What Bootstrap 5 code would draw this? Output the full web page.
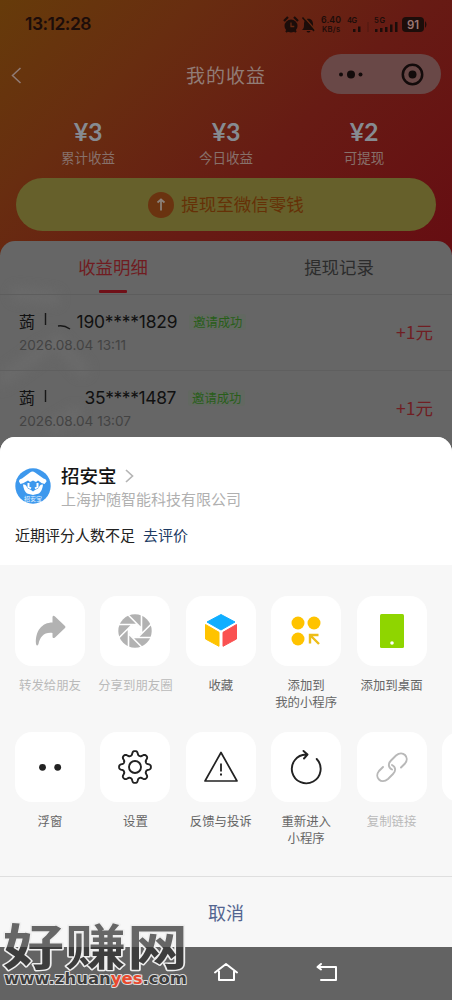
<!DOCTYPE html>
<html lang="zh-CN">
<head>
<meta charset="utf-8">
<meta name="viewport" content="width=device-width, initial-scale=1">
<title>我的收益</title>
<link href="https://cdn.jsdelivr.net/npm/bootstrap@5.3.0/dist/css/bootstrap.min.css" rel="stylesheet">
<style>
body{width:452px;height:1000px;overflow:hidden;background:#666;font-family:"Noto Sans CJK SC",sans-serif;font-weight:400}
svg{display:block;flex:none}
.phone{width:452px;height:1000px;overflow:hidden}
.hero{height:257px;background:linear-gradient(135deg,#663b0a 0%,#682d10 28%,#671b14 60%,#660d12 100%);color:#8b7c79}
.statusbar{height:49px;padding:0 24px 0 25px;color:#1c0d0a;font-family:Inter,sans-serif}
.clock{font-size:17.5px;font-weight:600;letter-spacing:-.52px}
.titlebar{height:53px;color:#917c76}
.titlebar h1{font-size:19px;font-weight:400;letter-spacing:1px;margin:0;line-height:51px}
.capsule{width:120px;height:40px;border-radius:20px;background:#694847;right:11px;top:5px}
.stats{padding:16px 19px 0;height:76px}
.stat-num{font:700 25px/26px Lato,sans-serif;height:26px;color:#868b91;letter-spacing:-.3px}
.stat-cap{font-size:13.5px;line-height:20px;margin-top:3px;color:#87716b}
.withdraw{height:53px;width:420px;margin:0 auto;border-radius:27px;background:#66602b;color:#653107;font-size:17.5px;gap:7px}
.sheet-list{margin-top:-16px;background:#666;border-radius:15px 15px 0 0}
.tabs{height:54px;border-bottom:1px solid #5d5d5d;font-size:17.4px;line-height:52px;color:#2c2c2c}
.tab-on{color:#701c21}
.tab-on::after{content:"";position:absolute;left:50%;bottom:1px;width:28px;height:3px;margin-left:-14px;background:#701018;border-radius:1px}
.entry{height:76px;border-bottom:1px solid #5f5f5f;padding:16px 19px 0}
.who{font-size:16px;line-height:22px;height:22px;color:#111}
.who>span:first-child{margin-top:-2px}
.phone-no{font:400 17.4px/22px Inter,sans-serif;color:#111}
.tag-ok{font-size:12.3px;line-height:16px;color:#285e19;background:#626861;padding:0 4px;border-radius:3px;margin-left:12px}
.when{font:400 13.6px/20px Inter,sans-serif;color:#434343;margin-top:2px}
.gain{font-size:17.5px;line-height:24px;color:#701e23;margin-top:9px}
.sheet{left:0;right:0;top:437px;height:510px;background:#f7f7f7;border-radius:15px 15px 0 0;overflow:hidden}
.sheet-top{height:128px;background:#fff;padding:26px 15px 0}
.app-name{font-size:18.5px;font-weight:500;line-height:25px;color:#151515}
.app-co{font-size:15px;line-height:22px;color:#b0b0b0}
.rate{font-size:15px;line-height:22px;color:#222;margin-top:14px}
.rate a{color:#1c3a63;text-decoration:none}
.tools{padding-left:15px;gap:15.4px;height:136px}
.tool{width:70px;flex:none}
.tile{width:70px;height:70px;border-radius:17px;background:#fff}
.tool-cap{font-size:12.4px;line-height:16.5px;color:#666;margin:11px -12px 0;text-align:center;white-space:nowrap}
.off .tool-cap{color:#bababa}
.cancel{border-top:1px solid #dfdfdf;height:71px;color:#536590;font-size:18px;line-height:70px}
.sysbar{left:0;right:0;top:947px;height:53px;background:#636363}
.stamp{left:0;top:905px}
</style>
</head>
<body>
<div class="phone position-relative">
  <header class="hero">
    <div class="statusbar d-flex align-items-center justify-content-between">
      <span class="clock">13:12:28</span>
      <svg width="146" height="20" viewBox="0 0 146 20" fill="#1c0d0a">
        <circle cx="9" cy="11" r="6.500"/><path d="M2 6l4-4M12 2l4 4M4 17l2-2M14 17l-2-2" stroke="#1c0d0a" stroke-width="2.200"/><path d="M9 7.500v4h3.300" fill="none" stroke="#662911" stroke-width="1.300"/>
        <path d="M20 15c2-2 2-3 2-6 0-7 9-7 9 0 0 3 0 4 2 6zM24.500 16h4c-1 2-3 2-4 0z"/><path d="M22.500 2.500L33.500 15" stroke="#662911" stroke-width="1.300"/><path d="M20.500 2.500L32 16" stroke="#1c0d0a" stroke-width="1.500"/>
        <g font-family="Inter" font-weight="600"><text x="39" y="8" font-size="8.800" textLength="20">6.40</text><text x="40" y="17" font-size="7.500" textLength="18">KB/s</text><text x="65" y="8" font-size="7.500" textLength="10">4G</text><text x="92" y="8" font-size="7.500" textLength="11">5G</text></g>
        <path d="M71 14h2.500v3H71zM76 11.500h2.500V17H76zM93 14h2.500v3H93zM98 13h2.500v4H98zM103 12h2.500v5H103zM108 9.500h2.500V17H108zM113 7h2.500v10H113z"/><path d="M85 7h2v10h-2z" opacity=".15"/>
        <rect x="120" y="2" width="22" height="15" rx="4"/><path d="M143 6q3 3.500 0 7z"/><text x="131" y="14" text-anchor="middle" font-family="Inter" font-weight="600" font-size="11.500" fill="#9b7774">91</text>
      </svg>
    </div>
    <div class="titlebar position-relative text-center">
      <svg class="position-absolute" style="left:10px;top:18px" width="12" height="18" fill="none" stroke="#917c76" stroke-width="1.500"><path d="M10.500 1L2.500 8.500l8 7.500"/></svg>
      <h1>我的收益</h1>
      <div class="capsule position-absolute">
        <svg width="120" height="40" fill="#130b0b"><circle cx="20" cy="20.500" r="2"/><circle cx="30" cy="20.500" r="4"/><circle cx="39.500" cy="20.500" r="2"/><circle cx="91.500" cy="20.500" r="4"/><circle cx="91.500" cy="20.500" r="9.700" fill="none" stroke="#130b0b" stroke-width="2.500"/></svg>
      </div>
    </div>
    <div class="stats row g-0 text-center">
      <div class="col-4"><div class="stat-num">¥3</div><div class="stat-cap">累计收益</div></div>
      <div class="col-4"><div class="stat-num">¥3</div><div class="stat-cap">今日收益</div></div>
      <div class="col-4"><div class="stat-num">¥2</div><div class="stat-cap">可提现</div></div>
    </div>
    <div class="withdraw d-flex align-items-center justify-content-center">
      <svg width="26" height="26"><circle cx="13" cy="13" r="13" fill="#6a3310"/><path d="M13 18.500V8M9.500 10.500L13 7.500l3.500 3" fill="none" stroke="#8b8078" stroke-width="1.800"/></svg>
      <span>提现至微信零钱</span>
    </div>
  </header>

  <main class="sheet-list position-relative">
    <svg class="position-absolute" style="left:0;top:40px;filter:blur(5px)" width="100" height="155"><path d="M18 13l35 4M0 100l45-32M57 60l25 28M55 145l20-12" stroke="#6d6d6d" stroke-width="16" stroke-linecap="round" opacity=".6"/></svg>
    <div class="tabs d-flex text-center position-relative">
      <div class="tab-on col-6 position-relative">收益明细</div><div class="col-6">提现记录</div>
    </div>
    <div class="entry d-flex justify-content-between position-relative">
      <div>
        <div class="who d-flex align-items-center"><span>蒟</span>
          <svg width="41.500" height="22" fill="none" stroke="#171717"><path d="M10.500 2v12" stroke-width="1.400"/><path d="M23 15q6-1 12 3" stroke-width="1.500"/></svg>
          <span class="phone-no" style="letter-spacing:-.2px">190****1829</span><span class="tag-ok">邀请成功</span></div>
        <div class="when">2026.08.04 13:11</div>
      </div>
      <div class="gain">+1元</div>
    </div>
    <div class="entry d-flex justify-content-between position-relative">
      <div>
        <div class="who d-flex align-items-center"><span>蒟</span>
          <svg width="49.500" height="22" fill="none" stroke="#171717"><path d="M10.500 3v12" stroke-width="1.400"/></svg>
          <span class="phone-no" style="letter-spacing:-.35px">35****1487</span><span class="tag-ok">邀请成功</span></div>
        <div class="when">2026.08.04 13:07</div>
      </div>
      <div class="gain">+1元</div>
    </div>
  </main>

  <section class="sheet position-absolute">
    <div class="sheet-top">
      <div class="d-flex">
        <svg width="36" height="36" viewBox="0 0 36 36" style="margin:5px 10px 0 0"><circle cx="18" cy="18" r="17.700" fill="#3d98ed"/><path d="M4 13.500Q4 11 7 10.500L15 4.500q2.500-2 5 0l8.500 6q3 .5 3 3l-2 2.500-3-1-3.500-2.500-2 1.500-3-1.500-3 1.500-2-1.500L8.500 15l-3 1z" fill="#fff"/><path d="M8 16.500q2-.5 3 1l2 3 3 1.500 2 1.500 2-1.500 3-1.500 2-3q1-1.500 3-1-.5 6-4 9l-6 1.500-6-1.500q-3.500-3-4-9z" fill="#fff"/><path d="M13.500 15v4l2.500 1.500M22.500 15v4L20 20.500" fill="none" stroke="#fff" stroke-width="2"/><text x="18" y="32.500" font-size="6" font-weight="500" text-anchor="middle" fill="#d9edff">招安宝</text></svg>
        <div>
          <div class="app-name d-flex align-items-center">招安宝<svg width="10" height="14" class="ms-2" fill="none" stroke="#b5b5b5" stroke-width="1.700"><path d="M1 1l6.500 6L1 13"/></svg></div>
          <div class="app-co">上海护随智能科技有限公司</div>
        </div>
      </div>
      <div class="rate">近期评分人数不足<a href="#" class="ms-2">去评价</a></div>
    </div>

    <div class="tools d-flex" style="margin-top:31px">
      <div class="tool off"><div class="tile d-flex align-items-center justify-content-center">
        <svg width="36" height="36" fill="#b2b2b2"><path d="M20.500 4q.5-2 2.500-.5l10 9.500q1 1 0 2L23 24.500q-2.500 1.500-2.500-1V20C12 19 8 24 6.500 31q-1.500 3-2.500 0C3 18 10 9.500 20.500 9.500z"/></svg>
      </div><div class="tool-cap">转发给朋友</div></div>
      <div class="tool off"><div class="tile d-flex align-items-center justify-content-center">
        <svg width="36" height="36" viewBox="-18 -18 36 36"><circle r="16.700" fill="#b2b2b2"/><circle r="6.500" fill="#fff"/><path d="M-6.500 3V-18M-6.700-2.500L8-17.300M-3-6.500H18M2.500-6.700L17.300 8M6.500-3V18M6.700 2.500L-8 17.300M3 6.500H-18M-2.500 6.700L-17.300-8" stroke="#fff" stroke-width="1.600" transform="scale(-1 1)"/></svg>
      </div><div class="tool-cap">分享到朋友圈</div></div>
      <div class="tool"><div class="tile d-flex align-items-center justify-content-center">
        <svg width="36" height="36" stroke-linejoin="round" stroke-width="1"><path d="M18 1.500L32 9l-14 8L4 9z" fill="#10aeff" stroke="#10aeff"/><path d="M2.500 11.500L16 19.300v14L2.500 26z" fill="#ffc300" stroke="#ffc300"/><path d="M33.500 11.500L20 19.300v14L33.500 26z" fill="#fa5151" stroke="#fa5151"/></svg>
      </div><div class="tool-cap">收藏</div></div>
      <div class="tool"><div class="tile d-flex align-items-center justify-content-center">
        <svg width="36" height="36" fill="#ffc300"><circle cx="10" cy="10" r="6.500"/><circle cx="26" cy="10" r="6.500"/><circle cx="10" cy="26" r="6.500"/><path d="M31 31L22.500 22.500M22 30.500V22h8.500" fill="none" stroke="#edbd18" stroke-width="2.400"/></svg>
      </div><div class="tool-cap">添加到<br>我的小程序</div></div>
      <div class="tool"><div class="tile d-flex align-items-center justify-content-center">
        <svg width="24" height="34"><rect width="24" height="34" rx="1.500" fill="#8fd500"/><circle cx="12" cy="29" r="1.800" fill="#fff"/></svg>
      </div><div class="tool-cap">添加到桌面</div></div>
    </div>

    <div class="tools d-flex">
      <div class="tool"><div class="tile d-flex align-items-center justify-content-center">
        <svg width="36" height="36" fill="#222"><circle cx="10.500" cy="18.300" r="3.400"/><circle cx="25.700" cy="18.300" r="3.400"/></svg>
      </div><div class="tool-cap">浮窗</div></div>
      <div class="tool"><div class="tile d-flex align-items-center justify-content-center">
        <svg width="36" height="36" viewBox="-18 -18 36 36" fill="none" stroke="#222" stroke-width="1.900" stroke-linejoin="round"><path id="gear"/><circle r="6"/></svg>
      </div><div class="tool-cap">设置</div></div>
      <div class="tool"><div class="tile d-flex align-items-center justify-content-center">
        <svg width="36" height="36" fill="none" stroke="#222" stroke-width="1.700" stroke-linejoin="round"><path d="M18 3.500L34 32H2z"/><path d="M18 14.500v8" stroke-width="1.800"/><path d="M18 24.500v2" stroke-width="2"/></svg>
      </div><div class="tool-cap">反馈与投诉</div></div>
      <div class="tool"><div class="tile d-flex align-items-center justify-content-center">
        <svg width="36" height="36" fill="none" stroke="#222" stroke-width="1.900" stroke-linecap="round" stroke-linejoin="round"><path d="M28.700 10A14.400 14.400 0 1 1 18 5.500M15.500 2l4 3.500-3.500 4"/></svg>
      </div><div class="tool-cap">重新进入<br>小程序</div></div>
      <div class="tool off"><div class="tile d-flex align-items-center justify-content-center">
        <svg width="36" height="36" fill="none" stroke="#b8b8b8" stroke-width="1.900" stroke-linecap="round"><path d="M18 20.500c-4-2-4-6-1-9l5-5c7-6 14 2 9 8l-4 4M18 16c4 2 4 6 1 9l-5 5c-7 6-14-2-9-8l4-4"/></svg>
      </div><div class="tool-cap">复制链接</div></div>
      <div class="tool"><div class="tile"></div></div>
    </div>
    <div style="height:8px"></div>
    <div class="cancel text-center">取消</div>
  </section>

  <nav class="sysbar position-absolute">
    <svg width="452" height="53" fill="none" stroke="#fff" stroke-width="2" stroke-linejoin="round" stroke-linecap="round"><path d="M215 25.500L226 17l11 8.500M219 24.500v8.500h15v-8.500"/><path d="M321 17l-3.500 3h18.500v13h-15M317.500 20l3.500 2.500"/></svg>
  </nav>

  <svg class="stamp position-absolute" width="196" height="95" stroke-linejoin="round" paint-order="stroke">
    <defs><linearGradient id="ink" gradientUnits="userSpaceOnUse" x1="0" y1="-60" x2="0" y2="0"><stop offset=".62" stop-color="#666"/><stop offset=".62" stop-color="#3d3d3d"/></linearGradient></defs>
    <text transform="translate(3 60) scale(1 .81)" font-size="61" font-weight="700" textLength="185" fill="url(#ink)" stroke="#efefef" stroke-width="3.500">好赚网</text>
    <text x="4" y="79" font-family="DejaVu Sans" font-weight="700" font-size="15.500" textLength="183" lengthAdjust="spacingAndGlyphs" fill="#3d3d3d" stroke="#dcdcdc" stroke-width="2">www.zhuan<tspan fill="#e8492e">yes</tspan>.com</text>
  </svg>
</div>
<script>
// Settings gear: eight rounded teeth, radius follows a smooth wave
const pts = [];
for (let i = 0; i < 240; i++) {
  const a = i / 240 * Math.PI * 2, r = 13.900 + 2 * Math.tanh(1.600 * Math.cos(8 * a)) / Math.tanh(1.600);
  pts.push((r * Math.cos(a)).toFixed(2) + ' ' + (r * Math.sin(a)).toFixed(2));
}
document.getElementById('gear').setAttribute('d', 'M' + pts.join('L') + 'Z');
</script>
<script src="https://cdn.jsdelivr.net/npm/bootstrap@5.3.0/dist/js/bootstrap.bundle.min.js"></script>
</body>
</html>
